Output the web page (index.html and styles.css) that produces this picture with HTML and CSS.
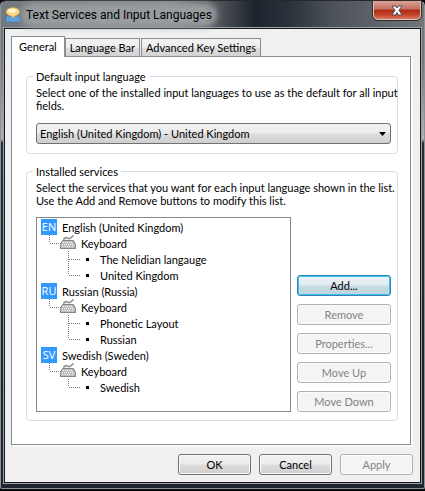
FILE: index.html
```html
<!DOCTYPE html>
<html lang="en">
<head>
<meta charset="utf-8">
<title>Text Services and Input Languages</title>
<meta name="viewport" content="width=device-width, initial-scale=1">
<link rel="stylesheet" href="styles.css">
</head>
<body>
<svg class="defs" aria-hidden="true">
  <defs>
    <symbol id="keyboard" viewBox="0 0 16 16">
      <path d="M4 5V3.500L6 2.500 8 3.500 10 3.500 13.500 .500" fill="none" stroke="#8c8c8c" stroke-width="1.500"/>
      <path d="M2.500 5.500h11l2 4v4h-15v-4z" fill="#bdbdbd" stroke="#858585"/>
      <path d="M3 7.500h10M2 9.500h12M2 11.500h2m1 0h6m1 0h2" fill="none" stroke="#fff" stroke-dasharray="1 1"/>
    </symbol>
    <symbol id="elbow" viewBox="0 0 12 16">
      <path d="M.5 0V8M1 8.500H12" fill="none" stroke="#777" stroke-dasharray="1 1"/>
    </symbol>
    <symbol id="branch" viewBox="0 0 12 16">
      <path d="M.5 0V16M1 8.500H12" fill="none" stroke="#777" stroke-dasharray="1 1"/>
    </symbol>
  </defs>
</svg>
<div class="window">
  <header class="titlebar">
    <svg class="app-icon" width="16" height="16" viewBox="0 0 16 16" aria-hidden="true">
      <path d="M1 9h13l1 1v5H1z" fill="#5a9bd5" stroke="#3f78b5" stroke-width=".7"/>
      <path d="M2 11h12M2 13h12" stroke="#75aee2" stroke-dasharray="1 1"/>
      <path d="M8 .8c4 0 6.600 1.700 6.600 4S12 8.600 9.500 9L8 11 7 9C3.500 8.800 1.400 7 1.400 4.800S4 .8 8 .8z" fill="#ffdc8c" stroke="#e9ad45" stroke-width=".7"/>
      <ellipse cx="7" cy="3.600" rx="4" ry="1.900" fill="#fff5d2"/>
    </svg>
    <h1 class="title"><span>Text Services and Input Languages</span></h1>
    <button class="close" type="button" aria-label="Close">
      <svg width="12" height="11" viewBox="0 0 12 11" aria-hidden="true">
        <path d="M1 1h3.500L6 3l1.500-2H11L8 5.300 11 10H7.500L6 7.500 4.500 10H1l3-4.700z" fill="#fff" stroke="#4c4f60"/>
      </svg>
    </button>
  </header>
  <main class="client">
    <div class="tabs" role="tablist">
      <button class="tab active" type="button" role="tab" aria-selected="true">General</button>
      <button class="tab" type="button" role="tab">Language Bar</button>
      <button class="tab" type="button" role="tab">Advanced Key Settings</button>
    </div>
    <section class="panel" role="tabpanel">
      <fieldset class="group">
        <legend>Default input language</legend>
        <label class="hint" for="lang">Select one of the installed input languages to use as the default for all input<br>fields.</label>
        <div class="combo">
          <select id="lang"><option>English (United Kingdom) - United Kingdom</option></select>
          <svg class="arrow" width="7" height="4" viewBox="0 0 7 4" aria-hidden="true"><path d="M0 0h7L3.500 4z"/></svg>
        </div>
      </fieldset>
      <fieldset class="group">
        <legend>Installed services</legend>
        <p class="hint">Select the services that you want for each input language shown in the list.<br>Use the Add and Remove buttons to modify this list.</p>
        <div class="services">
          <ul class="tree">
            <li><div class="row"><span class="badge">EN</span>English (United Kingdom)</div>
              <ul>
                <li><div class="row kind"><svg class="line"><use href="#elbow"/></svg><svg class="kb"><use href="#keyboard"/></svg>Keyboard</div>
                  <ul>
                    <li class="row leaf"><svg class="line"><use href="#branch"/></svg><i class="dot"></i>The Nelidian langauge</li>
                    <li class="row leaf"><svg class="line"><use href="#elbow"/></svg><i class="dot"></i>United Kingdom</li>
                  </ul></li>
              </ul></li>
            <li><div class="row"><span class="badge">RU</span>Russian (Russia)</div>
              <ul>
                <li><div class="row kind"><svg class="line"><use href="#elbow"/></svg><svg class="kb"><use href="#keyboard"/></svg>Keyboard</div>
                  <ul>
                    <li class="row leaf"><svg class="line"><use href="#branch"/></svg><i class="dot"></i>Phonetic Layout</li>
                    <li class="row leaf"><svg class="line"><use href="#elbow"/></svg><i class="dot"></i>Russian</li>
                  </ul></li>
              </ul></li>
            <li><div class="row"><span class="badge">SV</span>Swedish (Sweden)</div>
              <ul>
                <li><div class="row kind"><svg class="line"><use href="#elbow"/></svg><svg class="kb"><use href="#keyboard"/></svg>Keyboard</div>
                  <ul>
                    <li class="row leaf"><svg class="line"><use href="#elbow"/></svg><i class="dot"></i>Swedish</li>
                  </ul></li>
              </ul></li>
          </ul>
          <div class="actions">
            <button class="btn focus" type="button">Add...</button>
            <button class="btn" type="button" disabled>Remove</button>
            <button class="btn" type="button" disabled>Properties...</button>
            <button class="btn" type="button" disabled>Move Up</button>
            <button class="btn" type="button" disabled>Move Down</button>
          </div>
        </div>
      </fieldset>
    </section>
    <footer class="footer">
      <button class="btn" type="button">OK</button>
      <button class="btn" type="button">Cancel</button>
      <button class="btn" type="button" disabled>Apply</button>
    </footer>
  </main>
</div>
</body>
</html>
```
FILE: styles.css
```css
* { box-sizing: border-box; }
body {
  margin: 0;
  background: #08090c;
  color: #000;
  font: 11px/13px Lato, "Liberation Sans", sans-serif;
}
button, select { font: inherit; color: inherit; }
ul, p, h1 { margin: 0; padding: 0; }
ul { list-style: none; }
.defs { position: absolute; width: 0; height: 0; }

.window {
  padding: 0 3px 5px;
  border: 1px solid #8d9499;
  border-top-color: #25292c;
  border-radius: 6px 6px 2px 2px;
  background:
    linear-gradient(90deg, #73797e 0, #858a8e 40%, #4c5156 52%, #1d242d 60%, #29323a 68%, #4b5157 78%, #70767a 100%) 0 0 / 100% 28px no-repeat,
    linear-gradient(#6e7377 0, #74797d 60px, #b0b2b5 138px, #252d36 142px, #1c242b 80%, #202630 100%);
}
.titlebar { display: flex; align-items: center; height: 27px; padding-left: 1px; }
.app-icon { margin-right: 5px; }
.title {
  flex: 1;
  font: 12px/16px Roboto, sans-serif;
  white-space: nowrap;
}
.title span {
  background: #989c9f;
  box-shadow: 0 0 6px 5px #989c9f;
  border-radius: 8px;
}
.close {
  display: flex;
  align-items: center;
  justify-content: center;
  align-self: flex-start;
  width: 48px;
  height: 19px;
  padding: 0;
  border: 1px solid #d9c5c0;
  border-top: 0;
  border-radius: 0 0 5px 5px;
  background: linear-gradient(#d9a298 0, #c4705f 45%, #ad2c13 50%, #c0432a 75%, #d9775a 100%);
  box-shadow: 0 0 0 1px #35292a;
}

.client {
  padding: 7px 7px 7px 6px;
  border: 1px solid #14171b;
  background: #f0f0f0;
  outline: 1px solid #9ba1a5;
}
.tabs { display: flex; align-items: flex-end; gap: 1px; }
.tab {
  height: 18px;
  padding: 0 4px;
  border: 1px solid #898c95;
  border-bottom: 0;
  background: linear-gradient(#f3f3f3 0, #ececec 50%, #dedede 51%, #d2d2d2 100%);
  white-space: nowrap;
}
.tab.active {
  position: relative;
  height: 21px;
  margin: 0 -1px -1px 0;
  padding: 0 7px 2px;
  background: #fff;
}
.panel {
  display: grid;
  gap: 11px;
  padding: 13px 12px 23px 14px;
  border: 1px solid #898c95;
  background: #fff;
  box-shadow: 2px 2px 0 #fafafa;
  margin-right: 2px;
}
.group {
  min-width: 0;
  margin: 0;
  padding: 3px 6px 8px 9px;
  border: 1px solid #d5dfe5;
  border-radius: 4px;
}
.group legend { margin-left: -3px; padding: 0 3px; }
.hint { display: block; white-space: nowrap; }
.combo { position: relative; margin: 11px 0 1px; }
.combo select {
  display: block;
  appearance: none;
  width: 100%;
  height: 21px;
  padding: 0 20px 0 3px;
  border: 1px solid #707070;
  border-radius: 3px;
  background: linear-gradient(#f2f2f2 0, #ebebeb 48%, #dcdcdc 52%, #cfcfcf 100%);
}
.arrow { position: absolute; right: 5px; top: 9px; }

.services { display: flex; gap: 6px; margin-top: 10px; }
.tree {
  flex: 1;
  min-width: 0;
  padding: 1px 4px 16px;
  border: 1px solid #828790;
}
.row { display: flex; align-items: center; height: 16px; white-space: nowrap; }
.badge {
  width: 16px;
  height: 16px;
  margin-right: 5px;
  background: #3399ff;
  color: #fff;
  font: 11px/16px "Open Sans", sans-serif;
  text-align: center;
}
.line { width: 12px; height: 16px; }
.kind { padding-left: 8px; }
.kb { width: 16px; height: 16px; margin: 0 5px 0 -1px; }
.leaf { padding-left: 27px; }
.dot { width: 3px; height: 3px; margin: 1px 11px 0 6px; background: #000; }

.actions {
  display: grid;
  align-content: end;
  gap: 8px;
  width: 94px;
}
.btn {
  height: 21px;
  padding: 0;
  border: 1px solid #707070;
  border-radius: 3px;
  background: linear-gradient(#f2f2f2 0, #ebebeb 48%, #dcdcdc 52%, #cfcfcf 100%);
  box-shadow: inset 0 0 0 1px #fbfbfb;
}
.btn.focus {
  border-color: #3c7fb1;
  background: linear-gradient(#eef4f7 0, #e1eaef 48%, #cbdce4 52%, #bfd2dc 100%);
  box-shadow: inset 0 0 0 1px #36c8f4;
}
.btn:disabled { border-color: #adb2b5; background: #f4f4f4; color: #838383; }
.footer { display: flex; justify-content: flex-end; gap: 8px; margin-top: 9px; }
.footer .btn { width: 73px; }
```
